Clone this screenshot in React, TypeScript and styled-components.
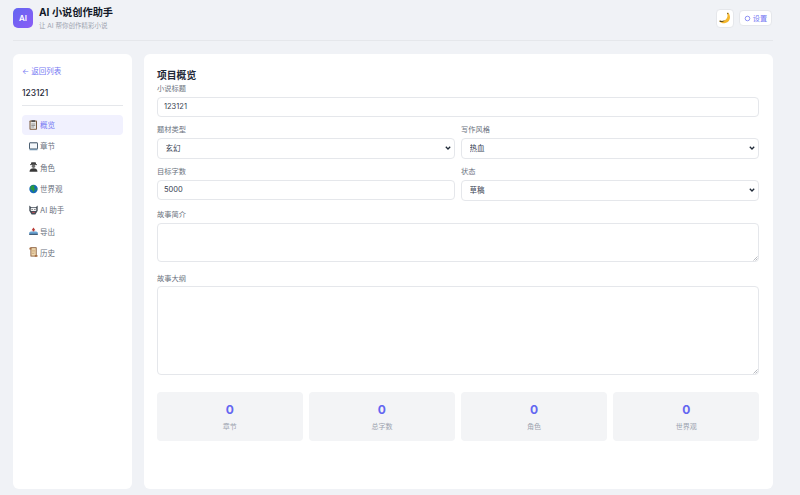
import React from 'react';
import styled, { createGlobalStyle } from 'styled-components';

const GlobalStyle = createGlobalStyle`
  html, body {
    margin: 0;
    padding: 0;
    height: 100%;
    background: #f0f2f6;
    font-family: Inter, "Noto Sans CJK SC", sans-serif;
    color: #1f2937;
  }
  * { box-sizing: border-box; }
`;

const chevron = encodeURIComponent(
  '<svg xmlns="http://www.w3.org/2000/svg" width="6" height="4" viewBox="0 0 6 4"><path d="M.8.8 3 3 5.200.8" fill="none" stroke="#1f2937" stroke-width="1.300"/></svg>',
);

const grip = encodeURIComponent(
  '<svg xmlns="http://www.w3.org/2000/svg" width="5" height="5" viewBox="0 0 5 5"><path d="M.5 4.500 4.500.5M2.500 4.500l2-2" stroke="#8a8f98" stroke-width=".6"/></svg>',
);

const Page = styled.div`
  width: 800px;
  height: 495px;
  padding: 0 27px 6px 13px;
  display: flex;
  flex-direction: column;
  overflow: hidden;
`;

const Header = styled.header`
  height: 41px;
  flex: none;
  display: flex;
  justify-content: space-between;
  align-items: center;
  padding-bottom: 4px;
  border-bottom: 1px solid #e5e7eb;
  margin-bottom: 13px;
`;

const Brand = styled.div`
  display: flex;
  align-items: center;
  gap: 6px;
`;

const Logo = styled.div`
  width: 20px;
  height: 20px;
  border-radius: 5px;
  background: linear-gradient(135deg, #6366f1, #8b5cf6);
  color: #fff;
  font-size: 8px;
  font-weight: 600;
  display: flex;
  align-items: center;
  justify-content: center;
`;

const BrandText = styled.div`
  display: flex;
  flex-direction: column;
  gap: 3px;
`;

const AppTitle = styled.h1`
  margin: 0;
  font-size: 10.2px;
  line-height: 14px;
  font-weight: 700;
  color: #111827;
`;

const AppSubtitle = styled.p`
  margin: 0;
  font-size: 6.5px;
  line-height: 9px;
  color: #9ca3af;
`;

const Actions = styled.div`
  display: flex;
  align-items: center;
  gap: 5px;
  padding-right: 1px;
`;

const ThemeButton = styled.button`
  width: 18px;
  height: 19px;
  padding: 0;
  background: #fff;
  border: 1px solid #e5e7eb;
  border-radius: 4px;
  display: flex;
  align-items: center;
  justify-content: center;
`;

const SettingsButton = styled.button`
  height: 16px;
  width: 33px;
  padding: 0;
  background: #fff;
  border: 1px solid #e5e7eb;
  border-radius: 4px;
  color: #7679f3;
  font: inherit;
  font-size: 7.2px;
  display: flex;
  align-items: center;
  justify-content: center;
  gap: 2px;
`;

const Body = styled.div`
  flex: 1;
  min-height: 0;
  display: flex;
  gap: 12px;
`;

const Sidebar = styled.aside`
  width: 119px;
  flex: none;
  background: #fff;
  border-radius: 6px;
  padding: 13px 9px;
`;

const BackLink = styled.a`
  display: block;
  font-size: 7.5px;
  line-height: 10px;
  color: #7679f3;
  margin-bottom: 10px;
`;

const ProjectName = styled.div`
  font-size: 8.5px;
  line-height: 12px;
  font-weight: 500;
  color: #1f2937;
  padding-bottom: 6px;
  border-bottom: 1px solid #e5e7eb;
  margin-bottom: 8.500px;
`;

const NavList = styled.nav`
  display: flex;
  flex-direction: column;
  gap: 1px;
`;

const NavItem = styled.div<{ $active?: boolean }>`
  height: 20.300px;
  padding: 0 7px;
  border-radius: 4px;
  display: flex;
  align-items: center;
  gap: 2px;
  font-size: 7.500px;
  background: ${(p) => (p.$active ? '#f1f1fe' : 'transparent')};
  color: ${(p) => (p.$active ? '#7679f3' : '#6b7280')};
`;

const Main = styled.main`
  width: 629px;
  flex: none;
  background: #fff;
  border-radius: 6px;
  padding: 14px 14px 14px 13px;
`;

const SectionTitle = styled.h2`
  margin: 0;
  font-size: 9.800px;
  line-height: 16px;
  font-weight: 700;
  color: #1f2937;
`;

const Field = styled.div`
  display: flex;
  flex-direction: column;
  margin-bottom: 8.500px;
  min-width: 0;
`;

const Label = styled.label`
  font-size: 7.250px;
  line-height: 10px;
  color: #6b7280;
  margin-bottom: 2.500px;
`;

const controlStyles = `
  width: 100%;
  border: 1px solid #e5e7eb;
  border-radius: 4px;
  background-color: #fff;
  color: #374151;
  font-family: inherit;
  font-size: 7.500px;
  outline: none;
`;

const TextInput = styled.input`
  ${controlStyles}
  height: 20px;
  padding: 0 6px;
`;

const Select = styled.select`
  ${controlStyles}
  height: 21px;
  padding: 0 7.500px;
  appearance: none;
  background-image: url("data:image/svg+xml,${chevron}");
  background-repeat: no-repeat;
  background-position: right 3px center;
`;

const TextArea = styled.textarea`
  ${controlStyles}
  display: block;
  padding: 6px;
  margin-bottom: 3px;
  resize: none;
  height: ${(p) => (p.rows === 1 ? '39.500px' : '89px')};
  background-image: url("data:image/svg+xml,${grip}");
  background-repeat: no-repeat;
  background-position: right 0 bottom 0;
`;

const TwoCols = styled.div`
  display: grid;
  grid-template-columns: 1fr 1fr;
  column-gap: 6px;
  margin-bottom: 1px;
`;

const Stats = styled.div`
  display: grid;
  grid-template-columns: repeat(4, 1fr);
  gap: 6.670px;
  margin-top: 13.500px;
`;

const StatCard = styled.div`
  height: 49px;
  background: #f3f4f6;
  border-radius: 4px;
  display: flex;
  flex-direction: column;
  align-items: center;
  padding-top: 10px;
`;

const StatValue = styled.div`
  font-size: 12px;
  line-height: 15px;
  font-weight: 700;
  color: #6366f1;
`;

const StatLabel = styled.div`
  font-size: 7px;
  line-height: 9px;
  margin-top: 5px;
  color: #9ca3af;
`;

const IconBox = styled.svg`
  width: 9px;
  height: 10px;
  flex: none;
`;

const ClipboardIcon = () => (
  <IconBox viewBox="0 0 9 10">
    <rect x="0.5" y="0.5" width="7.500" height="9.300" rx="0.8" fill="#7a5a3c" />
    <rect x="1.500" y="1.600" width="5.500" height="7.200" fill="#e6e6e6" />
    <rect x="2.500" y="0.2" width="3.500" height="1.800" fill="#555" />
    <path d="M2.300 4h3.900M2.300 5.500h3.900M2.300 7h2.800" stroke="#777" strokeWidth="0.7" />
  </IconBox>
);

const BookIcon = () => (
  <IconBox viewBox="0 0 9 10">
    <rect x="0.4" y="1.800" width="8.200" height="6.200" rx="0.5" fill="#f4f7fa" stroke="#223a50" strokeWidth="0.9" />
    <path d="M0.5 8.800h8" stroke="#4f7fa6" strokeWidth="0.7" />
  </IconBox>
);

const PersonIcon = () => (
  <IconBox viewBox="0 0 9 10">
    <rect x="2" y="0.3" width="5" height="2.200" rx="0.9" fill="#3d3d3d" />
    <rect x="1" y="2.300" width="7" height="0.8" fill="#2e2e2e" />
    <circle cx="4.500" cy="4.300" r="1.700" fill="#6d6d6d" />
    <path d="M0.5 9.800c0-2.400 1.800-3.500 4-3.500s4 1.100 4 3.500z" fill="#383838" />
  </IconBox>
);

const GlobeIcon = () => (
  <IconBox viewBox="0 0 9 10">
    <circle cx="4.500" cy="5" r="4.200" fill="#1668b8" />
    <path d="M1.700 2.300c1.300-1.300 2.900-1.400 3.900-.8L5.100 3.200 6 5.200 4.600 8.600 3.300 6 1.200 5.200z" fill="#2a9a3c" />
    <path d="M6.900 4.400l1.500.2-.8 2.200z" fill="#2a9a3c" />
  </IconBox>
);

const RobotIcon = () => (
  <IconBox viewBox="0 0 9 10">
    <path d="M0.300 0.600L2.300 2.200h4.400L8.700 0.600v5.200L6.400 9.500H2.600L0.300 5.800z" fill="#454e58" />
    <rect x="1.700" y="3.100" width="5.600" height="2.800" rx="0.6" fill="#f1f3f5" />
    <circle cx="3.100" cy="4.500" r="0.6" fill="#333" />
    <circle cx="5.900" cy="4.500" r="0.6" fill="#333" />
    <path d="M3.200 7.400h2.600" stroke="#d8515a" strokeWidth="0.9" />
  </IconBox>
);

const ExportIcon = () => (
  <IconBox viewBox="0 0 9 10">
    <path d="M4.500 1.400L6.400 4.200H2.600z" fill="#b93a34" />
    <rect x="3.700" y="4" width="1.600" height="1.600" fill="#b93a34" />
    <path d="M0.200 6.600L1.600 5.400h5.800l1.400 1.200v2H0.200z" fill="#6aa3d2" />
    <rect x="0.200" y="7.800" width="8.600" height="1" fill="#27445f" />
  </IconBox>
);

const ScrollIcon = () => (
  <IconBox viewBox="0 0 9 10">
    <rect x="1.900" y="0.7" width="5.300" height="8.400" fill="#f0d9b0" stroke="#7d4f2c" strokeWidth="0.8" />
    <path d="M0.400 1c0-.6 1.500-.7 1.900 0v1.500H0.400z" fill="#a86f40" />
    <path d="M5.800 9.700h2.400c.5 0 .5-1.300 0-1.600H5.800z" fill="#a86f40" />
    <path d="M3 3.300h3.100M3 4.900h3.100M3 6.500h2.400" stroke="#b58a5c" strokeWidth="0.5" />
  </IconBox>
);

const MoonIcon = () => (
  <svg width="12" height="12" viewBox="0 0 12 12">
    <path d="M9 .6 8.100 1.500C9.200 4 8 7 5.800 8.200 4 9.100 2.300 9 .8 8.600.6 9 .5 9.400.6 9.800 2 11 4.200 11.700 6.300 11.100 9.300 10.300 11.200 7.800 11 4.900 10.900 3.300 10.200 1.900 9 .6z" fill="#f4b72c" />
    <path d="M.8 8.600C2.300 9 4 9.100 5.800 8.200 4.900 9.700 2.700 10.400.6 9.800.5 9.400.6 9 .8 8.600z" fill="#57461c" />
    <path d="M8.100 1.500 9 .6 9.300 1.700 8.600 2.300z" fill="#57461c" />
  </svg>
);

const GearIcon = () => (
  <svg width="7" height="7" viewBox="0 0 7 7">
    <circle cx="3.500" cy="3.500" r="2.300" fill="none" stroke="#8f92f5" strokeWidth="1" />
  </svg>
);

const navItems = [
  { label: '概览', icon: <ClipboardIcon />, active: true },
  { label: '章节', icon: <BookIcon /> },
  { label: '角色', icon: <PersonIcon /> },
  { label: '世界观', icon: <GlobeIcon /> },
  { label: 'AI 助手', icon: <RobotIcon /> },
  { label: '导出', icon: <ExportIcon /> },
  { label: '历史', icon: <ScrollIcon /> },
];

const stats = [
  { label: '章节', value: 0 },
  { label: '总字数', value: 0 },
  { label: '角色', value: 0 },
  { label: '世界观', value: 0 },
];

const App: React.FC = () => (
  <>
    <GlobalStyle />
    <Page>
      <Header>
        <Brand>
          <Logo>AI</Logo>
          <BrandText>
            <AppTitle>AI 小说创作助手</AppTitle>
            <AppSubtitle>让 AI 帮你创作精彩小说</AppSubtitle>
          </BrandText>
        </Brand>
        <Actions>
          <ThemeButton>
            <MoonIcon />
          </ThemeButton>
          <SettingsButton>
            <GearIcon />
            设置
          </SettingsButton>
        </Actions>
      </Header>
      <Body>
        <Sidebar>
          <BackLink>← 返回列表</BackLink>
          <ProjectName>123121</ProjectName>
          <NavList>
            {navItems.map((item) => (
              <NavItem key={item.label} $active={item.active}>
                {item.icon}
                {item.label}
              </NavItem>
            ))}
          </NavList>
        </Sidebar>
        <Main>
          <SectionTitle>项目概览</SectionTitle>
          <Field>
            <Label>小说标题</Label>
            <TextInput defaultValue="123121" />
          </Field>
          <TwoCols>
            <Field>
              <Label>题材类型</Label>
              <Select defaultValue="玄幻">
                <option>玄幻</option>
              </Select>
            </Field>
            <Field>
              <Label>写作风格</Label>
              <Select defaultValue="热血">
                <option>热血</option>
              </Select>
            </Field>
            <Field>
              <Label>目标字数</Label>
              <TextInput defaultValue="5000" />
            </Field>
            <Field>
              <Label>状态</Label>
              <Select defaultValue="草稿">
                <option>草稿</option>
              </Select>
            </Field>
          </TwoCols>
          <Field>
            <Label>故事简介</Label>
            <TextArea rows={1} />
          </Field>
          <Field>
            <Label>故事大纲</Label>
            <TextArea rows={4} />
          </Field>
          <Stats>
            {stats.map((s) => (
              <StatCard key={s.label}>
                <StatValue>{s.value}</StatValue>
                <StatLabel>{s.label}</StatLabel>
              </StatCard>
            ))}
          </Stats>
        </Main>
      </Body>
    </Page>
  </>
);

export default App;
